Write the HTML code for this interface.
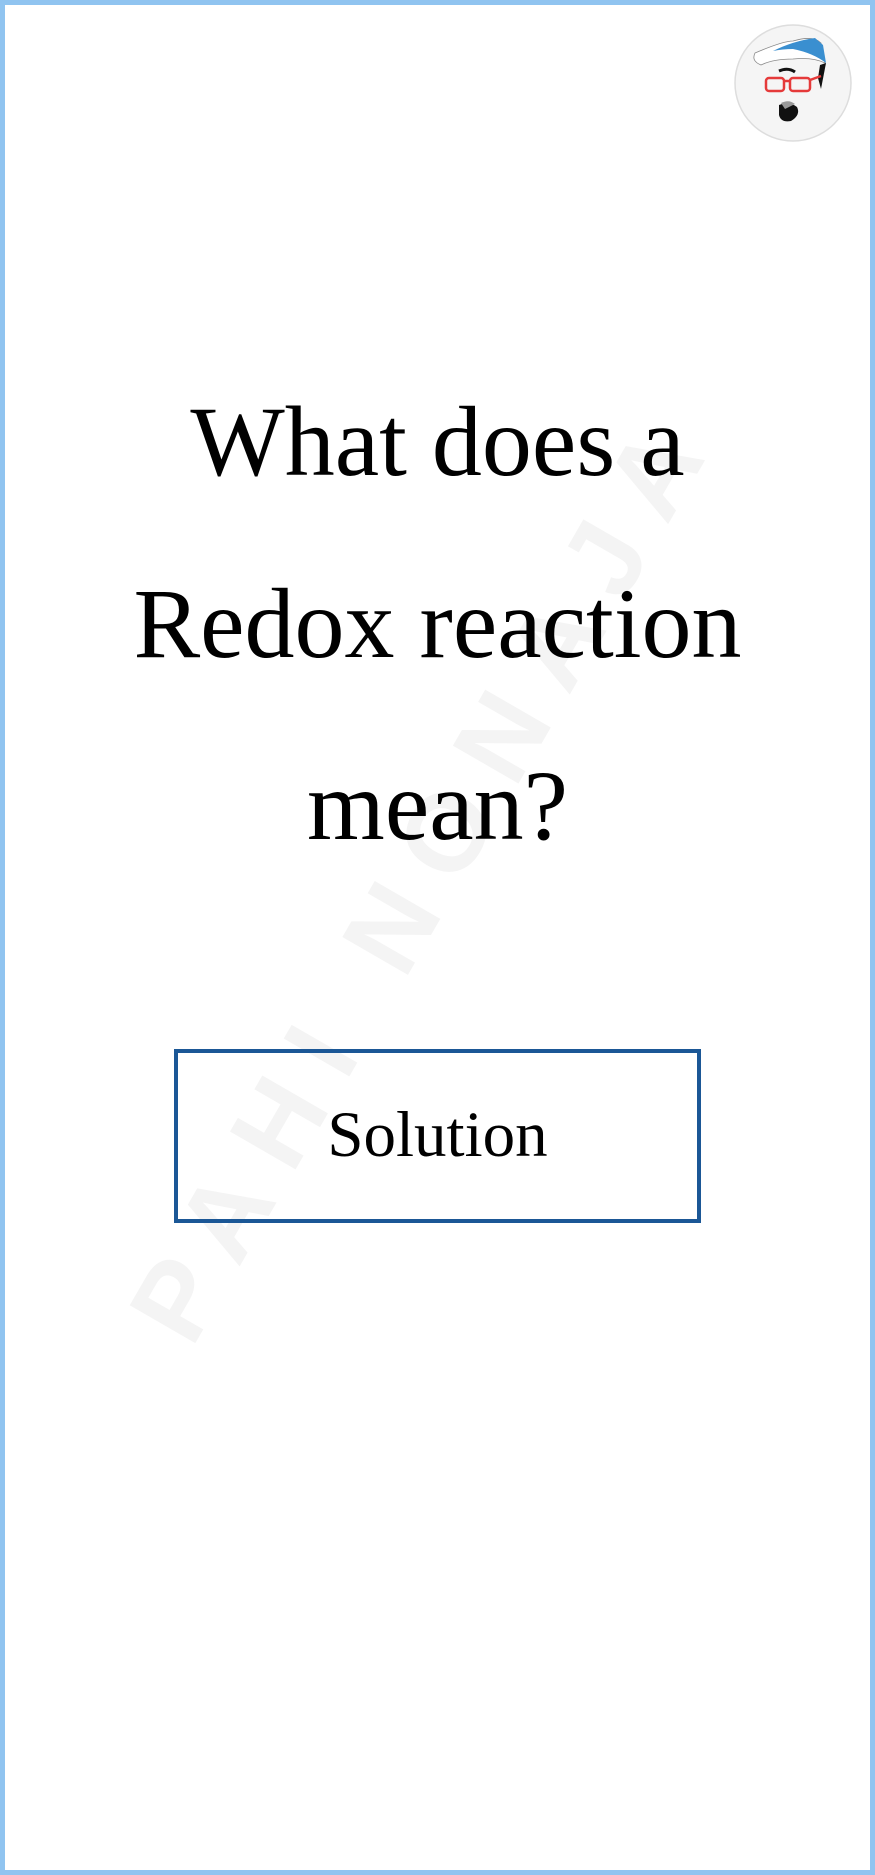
<!DOCTYPE html>
<html><head><meta charset="utf-8"><style>
html,body{margin:0;padding:0}
body{width:875px;height:1875px;position:relative;background:#fff;overflow:hidden;font-family:"Liberation Serif",serif}
.frame{position:absolute;left:0;top:0;width:875px;height:1875px;box-sizing:border-box;border:5px solid #90c4f0}
.q{position:absolute;left:0;width:875px;text-align:center;font-size:100px;color:#000;line-height:1}
.btn{position:absolute;left:174px;top:1049px;width:527px;height:174px;box-sizing:border-box;border:4px solid #1b5796}
.btn span{position:absolute;left:0;right:0;top:50px;text-align:center;font-size:65px;line-height:1}
.wm{position:absolute;left:-176px;top:813px;width:1200px;height:120px;line-height:120px;text-align:center;white-space:nowrap;font-family:"Liberation Sans",sans-serif;font-weight:bold;font-size:110px;color:#f4f4f4;transform:rotate(-60deg);transform-origin:center;letter-spacing:28px}
</style></head><body>
<div class="wm">PAHI NONAJA</div>
<div class="frame"></div>
<svg style="position:absolute;left:733px;top:23px" width="120" height="120" viewBox="0 0 120 120">
<circle cx="60" cy="60" r="58" fill="#f5f5f5" stroke="#ddd" stroke-width="1.5"/>
<path d="M22 30 Q50 18 60 18 Q80 12 88 20 L92 40 Q80 34 60 36 Q40 36 28 42 Q18 38 22 30Z" fill="#fff" stroke="#888" stroke-width="0.8"/>
<path d="M40 28 Q60 18 82 15 L90 22 L93 40 Q80 30 60 26 Q50 26 40 28Z" fill="#3a8fd0"/>
<path d="M87 42 L93 40 L88 66 L85 55Z" fill="#111"/>
<path d="M46 48 Q55 44 62 49" stroke="#111" stroke-width="3" fill="none"/>
<g fill="none" stroke="#e53a3a" stroke-width="2.5"><rect x="33" y="55" width="18" height="13" rx="3"/><rect x="57" y="55" width="20" height="13" rx="3"/><path d="M51 58 L57 58 M77 57 L88 53"/></g>
<path d="M46 82 Q56 78 64 84 Q68 92 58 98 Q48 100 46 92Z" fill="#111"/>
<path d="M48 80 Q56 76 62 81 L52 86Z" fill="#999"/>
</svg>
<div class="q" style="top:392px">What does a</div>
<div class="q" style="top:574px">Redox reaction</div>
<div class="q" style="top:756px">mean?</div>
<div class="btn"><span>Solution</span></div>
</body></html>
